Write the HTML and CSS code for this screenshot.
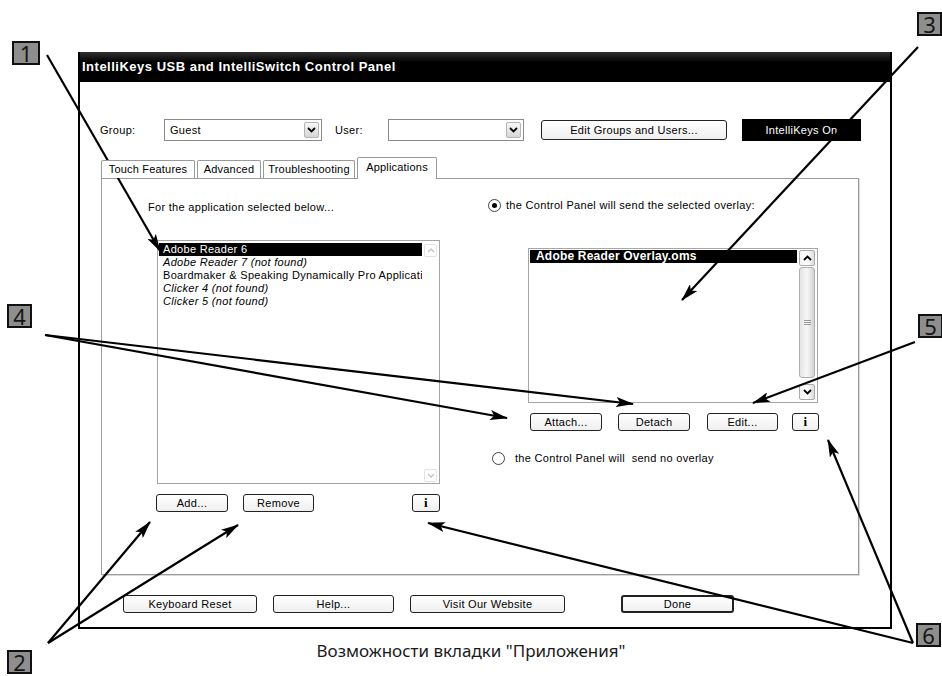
FILE: index.html
```html
<!DOCTYPE html>
<html lang="ru">
<head>
    <meta charset="UTF-8">
    <title>IntelliKeys USB and IntelliSwitch Control Panel</title>
    <link rel="stylesheet" href="styles.css">
</head>
<body>
    <div class="page">
        <div class="window">
            <div class="titlebar">IntelliKeys USB and IntelliSwitch Control Panel</div>

            <div class="toprow">
                <span class="lbl lbl-group">Group:</span>
                <div class="combo combo-group">
                    <span class="combo-text">Guest</span>
                    <span class="combo-btn"><svg width="9" height="6" viewBox="0 0 9 6"><path d="M1 1 L4.5 4.5 L8 1" fill="none" stroke="#000" stroke-width="1.8"/></svg></span>
                </div>
                <span class="lbl lbl-user">User:</span>
                <div class="combo combo-user">
                    <span class="combo-text"></span>
                    <span class="combo-btn"><svg width="9" height="6" viewBox="0 0 9 6"><path d="M1 1 L4.5 4.5 L8 1" fill="none" stroke="#000" stroke-width="1.8"/></svg></span>
                </div>
                <button class="btn btn-edit">Edit Groups and Users...</button>
                <div class="status">IntelliKeys On</div>
            </div>

            <div class="tabs">
                <div class="tab tab-touch">Touch Features</div>
                <div class="tab tab-adv">Advanced</div>
                <div class="tab tab-trouble">Troubleshooting</div>
                <div class="tab tab-apps active">Applications</div>
            </div>

            <div class="panel">
                <div class="col-left">
                    <p class="hint">For the application selected below...</p>
                    <div class="listbox app-list">
                        <ul class="items">
                            <li class="sel">Adobe Reader 6</li>
                            <li class="missing">Adobe Reader 7 (not found)</li>
                            <li>Boardmaker &amp; Speaking Dynamically Pro Application</li>
                            <li class="missing">Clicker 4 (not found)</li>
                            <li class="missing">Clicker 5 (not found)</li>
                        </ul>
                        <div class="faint-scroll">
                            <span class="faint-arr"><svg width="8" height="5" viewBox="0 0 8 5"><path d="M1 4 L4 1 L7 4" fill="none" stroke="#c4c4c4" stroke-width="1.4"/></svg></span>
                            <span class="faint-arr"><svg width="8" height="5" viewBox="0 0 8 5"><path d="M1 1 L4 4 L7 1" fill="none" stroke="#c4c4c4" stroke-width="1.4"/></svg></span>
                        </div>
                    </div>
                    <div class="btnrow btnrow-left">
                        <button class="btn btn-add">Add...</button>
                        <button class="btn btn-remove">Remove</button>
                        <button class="btn btn-info">i</button>
                    </div>
                </div>

                <div class="col-right">
                    <div class="radio-row">
                        <span class="radio on"></span>
                        <span>the Control Panel will send the selected overlay:</span>
                    </div>
                    <div class="listbox overlay-list">
                        <ul class="items">
                            <li class="sel">Adobe Reader Overlay.oms</li>
                        </ul>
                        <div class="vscroll">
                            <span class="sarr"><svg width="9" height="6" viewBox="0 0 9 6"><path d="M1 5 L4.5 1.5 L8 5" fill="none" stroke="#000" stroke-width="1.8"/></svg></span>
                            <span class="thumb"><span class="grip"></span></span>
                            <span class="sarr"><svg width="9" height="6" viewBox="0 0 9 6"><path d="M1 1 L4.5 4.5 L8 1" fill="none" stroke="#000" stroke-width="1.8"/></svg></span>
                        </div>
                    </div>
                    <div class="btnrow btnrow-right">
                        <button class="btn btn-attach">Attach...</button>
                        <button class="btn btn-detach">Detach</button>
                        <button class="btn btn-editov">Edit...</button>
                        <button class="btn btn-info">i</button>
                    </div>
                    <div class="radio-row radio-none">
                        <span class="radio"></span>
                        <span>the Control Panel will &nbsp;send no overlay</span>
                    </div>
                </div>
            </div>

            <div class="bottomrow">
                <button class="btn btn-reset">Keyboard Reset</button>
                <button class="btn btn-help">Help...</button>
                <button class="btn btn-web">Visit Our Website</button>
                <button class="btn btn-done">Done</button>
            </div>
        </div>
    </div>

    <p class="figcaption">Возможности вкладки "Приложения"</p>

    <!-- callout numbers and arrows -->
    <div class="badge b1">1</div>
    <div class="badge b2">2</div>
    <div class="badge b3">3</div>
    <div class="badge b4">4</div>
    <div class="badge b5">5</div>
    <div class="badge b6">6</div>

    <svg class="arrows" width="942" height="676" viewBox="0 0 942 676">
        <defs>
            <marker id="head" markerUnits="userSpaceOnUse" markerWidth="18" markerHeight="10" refX="17" refY="5" orient="auto">
                <path d="M0 0 L18 5 L0 10 L4 5 Z" fill="#000"/>
            </marker>
        </defs>
        <g stroke="#000" stroke-width="2.2" fill="none" marker-end="url(#head)">
            <line x1="47" y1="55" x2="160" y2="251"/>
            <line x1="918" y1="47" x2="682" y2="300"/>
            <line x1="45" y1="335" x2="633" y2="404"/>
            <line x1="45" y1="335" x2="507" y2="418"/>
            <line x1="915" y1="342" x2="753" y2="403"/>
            <line x1="48" y1="643" x2="150" y2="522"/>
            <line x1="48" y1="643" x2="238" y2="525"/>
            <line x1="913" y1="643" x2="428" y2="523"/>
            <line x1="913" y1="643" x2="828" y2="440"/>
        </g>
    </svg>
</body>
</html>
```

FILE: styles.css
```css
body {
    margin: 0;
    width: 942px;
    height: 676px;
    position: relative;
    overflow: hidden;
    background: #fff;
    color: #000;
    font-family: "Liberation Sans", Arial, sans-serif;
}
.page {
    padding: 52px 0 0 78px;
}
.window {
    width: 814px;
    height: 577px;
    box-sizing: border-box;
    border: 2px solid #000;
    border-top: 0;
    display: flex;
    flex-direction: column;
}
.titlebar {
    height: 30px;
    line-height: 30px;
    padding-left: 2px;
    background: linear-gradient(#303030, #000 35%);
    color: #fff;
    font-size: 13px;
    font-weight: bold;
    letter-spacing: 0.5px;
}

/* group / user row */
.toprow {
    display: flex;
    align-items: center;
    height: 24px;
    margin-top: 36px;
    padding-left: 20px;
    font-size: 11px;
    letter-spacing: 0.3px;
}
.lbl-group {
    width: 64px;
}
.lbl-user {
    width: 53px;
    margin-left: 13px;
}
.combo {
    height: 22px;
    box-sizing: border-box;
    border: 1px solid #8a8a8a;
    display: flex;
    align-items: center;
}
.combo-group {
    width: 158px;
}
.combo-user {
    width: 136px;
}
.combo-text {
    flex: 1;
    padding-left: 5px;
}
.combo-btn {
    width: 15px;
    height: 16px;
    margin-right: 2px;
    box-sizing: border-box;
    border: 1px solid #b4b4b4;
    border-radius: 2px;
    background: linear-gradient(#f8f8f8, #d6d6d6);
    display: flex;
    justify-content: center;
    align-items: center;
}
.status {
    width: 119px;
    height: 22px;
    line-height: 22px;
    margin-left: 15px;
    background: #000;
    color: #fff;
    text-align: center;
}

/* buttons */
.btn {
    height: 18px;
    box-sizing: border-box;
    padding: 0;
    border: 1px solid #222;
    border-radius: 3px;
    background: linear-gradient(#fff, #efefef);
    color: #000;
    font-family: "Liberation Sans", Arial, sans-serif;
    font-size: 11px;
    letter-spacing: 0.3px;
    line-height: 16px;
    text-align: center;
}
.btn-edit {
    width: 186px;
    height: 20px;
    margin-left: 17px;
}
.btn-info {
    width: 28px;
    font-family: "Liberation Serif", serif;
    font-weight: bold;
    font-size: 13px;
}

/* tabs */
.tabs {
    display: flex;
    align-items: flex-end;
    gap: 2px;
    height: 22px;
    margin: 15px 0 -1px 21px;
    position: relative;
    z-index: 1;
    font-size: 11px;
    letter-spacing: 0.2px;
}
.tab {
    height: 18px;
    line-height: 17px;
    margin-bottom: 1px;
    box-sizing: border-box;
    border: 1px solid #999;
    border-bottom: 0;
    border-radius: 2px 2px 0 0;
    background: #fff;
    text-align: center;
}
.tab-touch {
    width: 94px;
}
.tab-adv {
    width: 64px;
}
.tab-trouble {
    width: 92px;
}
.tab-apps {
    width: 80px;
}
.tab.active {
    height: 22px;
    margin-bottom: 0;
    line-height: 19px;
}

/* tab page */
.panel {
    width: 758px;
    height: 397px;
    margin-left: 21px;
    box-sizing: border-box;
    border: 1px solid #9c9c9c;
    box-shadow: 1px 1px 0 #d9d9d9;
    display: flex;
    font-size: 11px;
    letter-spacing: 0.3px;
}
.col-left {
    width: 386px;
    box-sizing: border-box;
    padding: 22px 0 0 46px;
}
.hint {
    margin: 0;
    line-height: 13px;
}
.listbox {
    box-sizing: border-box;
    border: 1px solid #a5a5a5;
    background: #fff;
    display: flex;
}
.items {
    flex: 1;
    margin: 0;
    padding: 1px 0 0 1px;
    list-style: none;
    overflow: hidden;
}
.items li {
    line-height: 13px;
    padding-left: 4px;
    white-space: nowrap;
    letter-spacing: 0.3px;
}
.items li.sel {
    background: #000;
    color: #fff;
}
.items li.missing {
    font-style: italic;
}
.app-list {
    width: 283px;
    height: 244px;
    margin: 26px 0 0 9px;
}
.app-list .items {
    padding-top: 2px;
}
.faint-scroll {
    width: 13px;
    margin: 3px 2px 1px 2px;
    display: flex;
    flex-direction: column;
    justify-content: space-between;
}
.faint-arr {
    height: 13px;
    box-sizing: border-box;
    border: 1px solid #e2e2e2;
    border-radius: 2px;
    display: flex;
    justify-content: center;
    align-items: center;
}
.btnrow {
    display: flex;
    margin-top: 10px;
}
.btnrow-left {
    width: 292px;
    padding-left: 8px;
    box-sizing: border-box;
}
.btn-add {
    width: 72px;
}
.btn-remove {
    width: 71px;
    margin-left: 15px;
}
.btnrow-left .btn-info {
    margin-left: auto;
}

.col-right {
    flex: 1;
    padding-top: 20px;
}
.radio-row {
    display: flex;
    align-items: center;
    gap: 5px;
    line-height: 13px;
}
.radio {
    width: 13px;
    height: 13px;
    box-sizing: border-box;
    border: 1px solid #444;
    border-radius: 50%;
    display: flex;
    justify-content: center;
    align-items: center;
}
.radio.on::after {
    content: "";
    width: 5px;
    height: 5px;
    border-radius: 50%;
    background: #000;
}
.overlay-list {
    width: 290px;
    height: 155px;
    margin: 36px 0 0 40px;
}
.overlay-list .items li.sel {
    padding-left: 6px;
    font-size: 12px;
    font-weight: bold;
    letter-spacing: 0.2px;
}
.vscroll {
    width: 16px;
    margin: 1px 2px 2px 2px;
    display: flex;
    flex-direction: column;
}
.sarr {
    height: 16px;
    box-sizing: border-box;
    border: 1px solid #aaa;
    border-radius: 2px;
    background: linear-gradient(90deg, #f4f4f4, #fff, #dcdcdc);
    display: flex;
    justify-content: center;
    align-items: center;
}
.thumb {
    flex: 1;
    margin: 1px 0 6px;
    box-sizing: border-box;
    border: 1px solid #b0b0b0;
    border-radius: 3px;
    background: linear-gradient(90deg, #e4e4e4, #f7f7f7 50%, #d2d2d2);
    display: flex;
    justify-content: center;
    align-items: center;
}
.grip {
    width: 7px;
    height: 5px;
    border-top: 1px solid #999;
    border-bottom: 1px solid #999;
    box-sizing: border-box;
    background: linear-gradient(transparent 1px, #999 1px, #999 2px, transparent 2px);
}
.btnrow-right {
    margin-left: 42px;
}
.btn-attach {
    width: 72px;
}
.btn-detach {
    width: 72px;
    margin-left: 16px;
}
.btn-editov {
    width: 71px;
    margin-left: 17px;
}
.btnrow-right .btn-info {
    width: 27px;
    margin-left: 14px;
}
.radio-none {
    margin-top: 21px;
    padding-left: 4px;
    gap: 10px;
}

/* bottom buttons */
.bottomrow {
    display: flex;
    gap: 16px;
    margin-top: 20px;
    padding-left: 43px;
}
.btn-reset {
    width: 134px;
}
.btn-help {
    width: 121px;
}
.btn-web {
    width: 155px;
}
.btn-done {
    width: 113px;
    margin-left: 40px;
    border-width: 2px;
    line-height: 14px;
}

.figcaption {
    margin: 11px 0 0;
    text-align: center;
    font-family: "Noto Sans", "Open Sans", sans-serif;
    font-size: 17px;
    line-height: 22px;
    color: #1a1a1a;
}

/* callouts */
.badge {
    position: absolute;
    width: 25px;
    height: 24px;
    box-sizing: border-box;
    border: 2px solid #111;
    background: #8e8e8e;
    color: #161616;
    font-family: "Noto Sans", "Open Sans", sans-serif;
    font-size: 22px;
    line-height: 20px;
    text-align: center;
}
.b1 {
    left: 12px;
    top: 41px;
    width: 28px;
}
.b2 {
    left: 7px;
    top: 650px;
}
.b3 {
    left: 917px;
    top: 12px;
}
.b4 {
    left: 7px;
    top: 304px;
}
.b5 {
    left: 918px;
    top: 314px;
}
.b6 {
    left: 916px;
    top: 623px;
}
.arrows {
    position: absolute;
    left: 0;
    top: 0;
    pointer-events: none;
}
```
